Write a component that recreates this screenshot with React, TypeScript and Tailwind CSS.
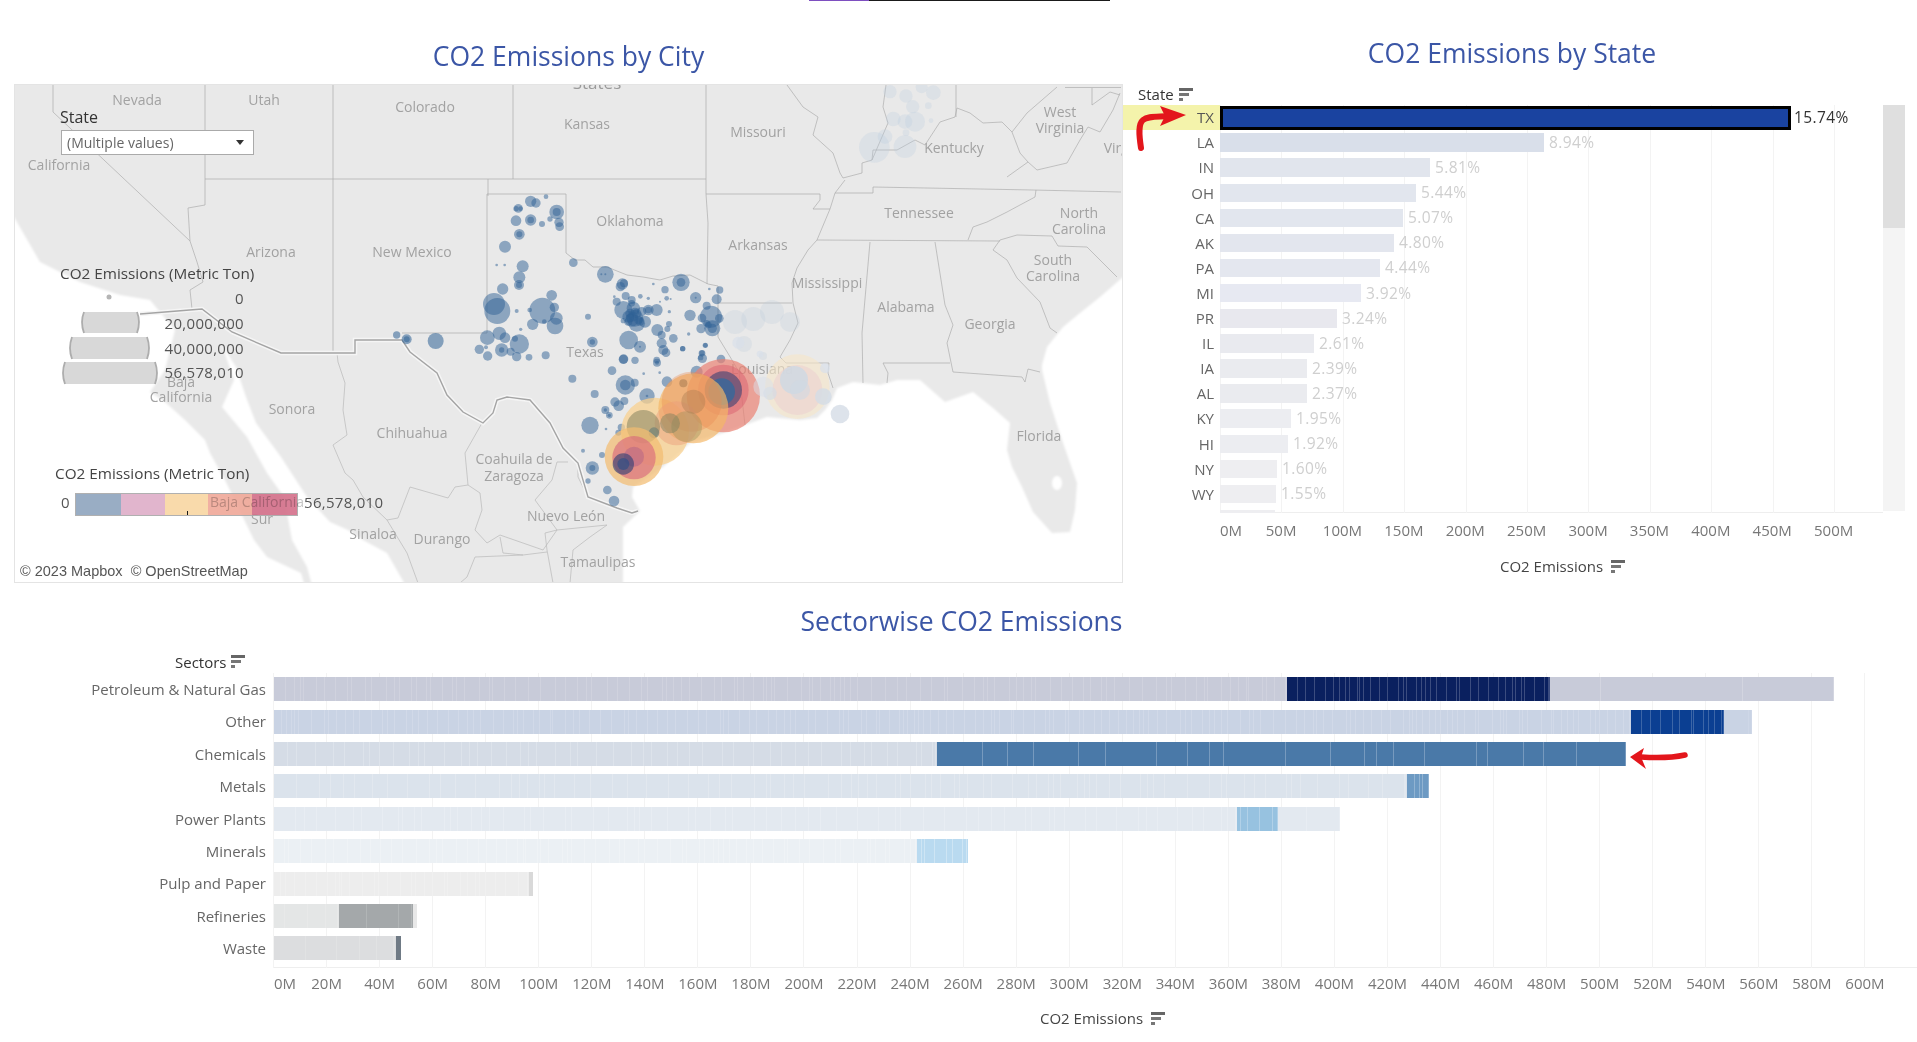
const SortIcon = () => (
  <svg width="14" height="13" viewBox="0 0 14 13" className="shrink-0">
    <rect x="0" y="0" width="14" height="3" fill="#666" />
    <rect x="0" y="5" width="10" height="3" fill="#777" />
    <rect x="0" y="10" width="4" height="3" fill="#777" />
  </svg>
);

// map labels, centre points in page pixels
const mapLabels: [string, number, number][] = [
  ["Nevada", 137, 100],
  ["Utah", 264, 100],
  ["Colorado", 425, 107],
  ["Kansas", 587, 124],
  ["Missouri", 758, 132],
  ["West", 1060, 112],
  ["Virginia", 1060, 128],
  ["Kentucky", 954, 148],
  ["Virginia", 1128, 148],
  ["California", 59, 165],
  ["Tennessee", 919, 213],
  ["Oklahoma", 630, 221],
  ["Arkansas", 758, 245],
  ["North", 1079, 213],
  ["Carolina", 1079, 229],
  ["South", 1053, 260],
  ["Carolina", 1053, 276],
  ["Arizona", 271, 252],
  ["New Mexico", 412, 252],
  ["Texas", 585, 352],
  ["Mississippi", 827, 283],
  ["Alabama", 906, 307],
  ["Georgia", 990, 324],
  ["Louisiana", 762, 369],
  ["Florida", 1039, 436],
  ["Sonora", 292, 409],
  ["Chihuahua", 412, 433],
  ["Coahuila de", 514, 459],
  ["Zaragoza", 514, 476],
  ["Nuevo León", 566, 516],
  ["Tamaulipas", 598, 562],
  ["Durango", 442, 539],
  ["Sinaloa", 373, 534],
  ["Baja", 181, 382],
  ["California", 181, 397],
  ["Sur", 262, 519],
];

const stateLines = [
  "M205 84V205L188 208L190 241L197 262L203 282L190 290L192 309",
  "M53 84V112L190 241",
  "M205 179H706",
  "M333 84V353",
  "M513 84V179",
  "M488 179V196",
  "M487 194H566V253L575 260L585 260L593 267L607 267L627 275L643 277L660 280L673 276L690 275L708 284L718 286V337L732 360L739 372L745 425",
  "M402 333H487V194",
  "M706 84V194L708 223L707 284",
  "M706 194H820V200L813 209H830",
  "M718 303H792",
  "M845 180L835 193L830 209L817 240L808 250L797 268L792 283L793 303L798 323L790 340L780 357L786 363H829L828 373L833 388",
  "M835 193H873V187L1033 190L1121 192",
  "M817 240L1000 241",
  "M870 242L862 333L863 383",
  "M935 242L945 305L953 325L947 343L953 372L1022 377L1025 382L1028 369L1040 372",
  "M883 363H950M883 363L888 373L887 383",
  "M993 250L1007 260L1017 278L1040 302L1050 328L1057 333",
  "M993 250L1000 240L1017 235L1052 236L1058 246L1087 247L1117 277",
  "M1036 190L1035 197L1020 205L1007 212L987 222L973 227L968 240",
  "M787 85L803 107L818 117L813 135L833 153L840 173L843 178L862 173L862 163L872 160L873 150L897 150L915 140L925 145L940 122L955 117L957 108L970 113L983 123L1002 122L1012 132L1027 113L1057 87",
  "M886 85L883 107L888 123L872 160",
  "M956 85V117",
  "M1012 132L1020 153L1028 162L1037 170L1067 163L1080 140L1088 127L1100 132L1113 110L1120 93",
  "M1028 162L1007 177",
  "M1065 87.5H1121M1092 88V105L1110 92L1120 95",
];

const mexicoLines = [
  "M337 353L338 362L345 383L343 410L347 435L333 445L345 473L353 480L363 497L387 520L407 553L418 583",
  "M482 423L465 453L468 485L455 487L448 498L410 487L398 518L387 520",
  "M468 485L480 493L482 510L475 530L487 543L500 535L543 550L557 530L535 500L552 480L557 462L568 462",
  "M547 550L545 533L557 530L607 525L590 537L573 550L570 583",
  "M547 550L553 583M547 552L523 555L503 553L500 537M523 555L475 557L467 577L460 583",
  "M578 463V477L588 497",
];

const border =
  "M140 314L202 309L232 332L281 353H355V340H402L410 352L437 373L447 395L463 412L483 423L493 413L497 400L507 397L530 400L550 423L563 448L578 463L588 497L617 508L632 513L638 511";

// bubbles read off at 3x, [x, y, r] relative to a crop origin
const texasNorth = [
  212,64,17, 228,69,14, 258,50,7, 290,96,22, 290,96,12, 168,122,16, 212,120,17, 212,120,10, 246,132,9, 270,117,8,
  175,85,13, 168,86,8, 182,86,7, 297,127,14, 299,140,13, 178,163,16, 178,163,9, 135,200,18, 110,255,4, 134,255,4,
  188,259,18, 178,292,18, 177,315,15, 177,315,9, 128,327,17, 340,248,13, 436,283,25, 424,283,3, 436,283,3, 487,312,17,
  492,310,12, 481,320,14, 580,312,4, 615,329,11, 663,307,26, 663,307,13, 707,353,17, 707,353,3, 779,330,11, 770,358,15,
  740,377,12, 748,327,4, 620,355,7, 632,357,3, 565,355,5, 600,365,3, 275,346,16, 102,372,33, 112,393,39, 247,392,39,
  283,382,14, 170,393,6, 209,390,7, 289,415,19, 285,438,25, 253,425,7, 218,433,17, 182,448,5, 384,410,9, 470,365,12,
  497,348,12, 541,349,7, 463,350,4, 490,390,27, 515,360,12, 520,385,20, 505,410,18, 525,415,25, 545,395,14, 565,390,16,
  590,390,18, 555,425,18, 530,430,25, 515,420,20, 490,422,8, 628,395,5, 690,406,17, 726,414,13, 753,410,33, 778,415,13,
  757,445,24, 723,446,14, 740,430,10, 592,450,18, 605,465,12, 622,447,9, 627,432,9, 640,475,13, 686,462,5, 605,490,15,
  610,510,15, 618,518,13, 668,506,8, 736,496,8, 726,520,10, 118,460,20, 82,473,22, 135,473,16, 165,476,9, 178,492,29,
  125,510,20, 125,510,8, 152,515,12, 58,508,14, 78,502,6, 83,528,14, 170,530,14, 207,532,10, 257,526,12, 397,486,16,
  397,486,8, 506,480,28, 540,500,18, 540,500,3, 490,538,14, 590,540,10, 727,535,14,
  510,400,14, 530,400,14, 520,410,14, 505,425,12, 535,420,12, 515,370,10, 525,395,12, 565,390,10, 510,415,12, 540,425,12,
  757,445,14, 745,435,10,
];

const texasSouth = [
  191,57,14, 225,61,11, 291,68,12, 291,68,6, 156,92,13, 37,116,12, 251,101,4, 299,98,4, 196,135,29, 196,135,16,
  224,128,12, 321,125,16, 410,95,18, 370,130,12, 104,162,12, 261,168,23, 261,168,4, 165,186,14, 176,197,16, 193,183,12,
  136,210,12, 136,210,5, 148,226,10, 148,226,5, 90,256,26, 138,267,4, 184,262,11, 175,278,9, 282,278,16, 69,332,6,
  126,345,9, 97,384,20, 97,384,9, 84,423,8, 142,450,13, 162,483,16, 368,26,8, 436,16,7, 426,39,8, 422,53,8, 483,57,13,
];

const westTexas = [
  200,45,11, 230,58,15, 230,58,9, 317,63,24,
];

const faintNorth = [
  283,442,46, 315,410,22, 375,440,34, 340,357,22, 375,365,22, 405,365,30, 398,320,20, 378,288,20, 330,275,20, 460,278,22,
  425,262,18, 445,317,10, 453,362,7, 378,398,10,
];

// big gulf coast plants, crop coordinates again
const gulfBubbles: [number, number, number, string, number][] = [
  [490, 167, 110, "#ea7f70", 0.68],
  [490, 150, 76, "#d9596a", 0.45],
  [490, 150, 56, "#3f4273", 0.62],
  [485, 155, 40, "#2c6a9f", 0.7],
  [285, 275, 102, "#f8d08f", 0.75],
  [400, 205, 105, "#f4b765", 0.68],
  [395, 185, 90, "#e98a52", 0.35],
  [350, 250, 66, "#ec9b7a", 0.45],
  [380, 260, 46, "#98905a", 0.4],
  [330, 250, 30, "#7c805f", 0.48],
  [400, 185, 36, "#a87a4f", 0.4],
  [370, 130, 12, "#a87a4f", 0.4],
  [250, 260, 50, "#8f8b66", 0.6],
  [282, 278, 16, "#5f7a78", 0.5],
  [222, 350, 88, "#f3bd72", 0.72],
  [222, 353, 65, "#d9657c", 0.62],
  [222, 350, 30, "#9a4f8a", 0.35],
  [190, 372, 32, "#2f3f74", 0.62],
  [190, 372, 18, "#2b4d86", 0.62],
  [712, 140, 97, "#f6e6c8", 0.6],
  [712, 150, 75, "#edd2d0", 0.6],
  [702, 120, 42, "#cdd8e4", 0.8],
  [720, 150, 30, "#cdd8e4", 0.55],
  [630, 160, 20, "#d3dce6", 0.65],
  [790, 170, 25, "#d3dce6", 0.8],
  [840, 222, 28, "#d9e0e9", 0.9],
  [610, 140, 30, "#d9e0e9", 0.5],
  [795, 85, 15, "#d9e0e9", 0.7],
  [600, 42, 10, "#d9e0e9", 0.7],
  [535, 8, 18, "#d9e0e9", 0.7],
];

const MapDrawing = () => (
  <svg className="absolute inset-0" width="1109" height="499" viewBox="15 85 1109 499">
    <defs>
      <filter id="soft" x="-5%" y="-5%" width="110%" height="110%">
        <feGaussianBlur stdDeviation="1.1" />
      </filter>
    </defs>
    <rect x="14" y="84" width="1110" height="500" fill="#e9e9e9" />
    <g fill="#fff" filter="url(#soft)">
      <path d="M4 217H14L40 262L80 282L120 295L150 300L175 330L165 370L150 392L165 402L185 420L205 440L210 453L225 480L254 540L267 557L301 573L307 593H4Z" />
      <path d="M222 345L236 367L246 397L256 423L281 457L307 497L330 522L348 530L363 540L387 553L410 593H314L307 567L292 540L284 497L267 473L247 437L222 407L234 380Z" />
      <path d="M640 511L632 497L633 487L663 467L690 443L723 433L767 417L800 420L817 418L825 410L832 400L837 388L853 382L880 385L897 380L920 380L945 402L973 392L993 408L1010 423L1007 450L1012 467L1022 487L1033 512L1052 533L1070 532L1075 510L1077 483L1062 440L1050 403L1042 370L1042 365L1047 347L1063 327L1080 313L1100 297L1123 277H1133V593H623V527Z" />
      <ellipse cx="1057" cy="483" rx="5" ry="7" />
    </g>
    {stateLines.map((d, i) => (
      <path key={i} d={d} fill="none" stroke="#adadad" strokeWidth="0.7" />
    ))}
    {mexicoLines.map((d, i) => (
      <path key={i} d={d} fill="none" stroke="#b9b9b9" strokeWidth="0.7" />
    ))}
    <path d={border} fill="none" stroke="#f5f5f5" strokeWidth="4.5" />
    <path d={border} fill="none" stroke="#a4a4a4" strokeWidth="1.4" />
    {/* size legend */}
    <circle cx="109" cy="297" r="2.5" fill="#b5b5b5" />
    <path d="M84 312H137Q141 322 137 333H84Q80 322 84 312Z" fill="#d8d8d8" />
    <path d="M72 337H147Q151 348 147 359H72Q68 348 72 337Z" fill="#d8d8d8" />
    <path d="M65 362H155Q159 373 155 384H65Q61 373 65 362Z" fill="#d8d8d8" />
    <g fill="none" stroke="#adadad" strokeWidth="1.8">
      <path d="M84 312Q80 322 84 333M137 312Q141 322 137 333" />
      <path d="M72 337Q68 348 72 359M147 337Q151 348 147 359" />
      <path d="M65 362Q61 373 65 384M155 362Q159 373 155 384" />
    </g>
  </svg>
);

const Triples = ({ ox, oy, data, fill, alpha }: { ox: number; oy: number; data: number[]; fill: string; alpha: number }) => (
  <>
    {Array.from({ length: data.length / 3 }, (_, i) => (
      <circle
        key={i}
        cx={ox + data[i * 3] / 3}
        cy={oy + data[i * 3 + 1] / 3}
        r={data[i * 3 + 2] / 3}
        fill={fill}
        fillOpacity={alpha}
      />
    ))}
  </>
);

const Bubbles = () => (
  <svg className="absolute inset-0" width="1109" height="499" viewBox="15 85 1109 499">
    <Triples ox={780} oy={0} data={faintNorth} fill="#bccbdd" alpha={0.28} />
    <Triples ox={420} oy={170} data={[945,456,36, 1000,447,36, 1056,426,36, 1110,456,30, 972,522,24, 1029,558,12]} fill="#bccbdd" alpha={0.25} />
    <Triples ox={460} oy={180} data={texasNorth} fill="#2f6295" alpha={0.5} />
    <Triples ox={560} oy={340} data={texasSouth} fill="#2f6295" alpha={0.5} />
    <Triples ox={330} oy={320} data={westTexas} fill="#2f6295" alpha={0.55} />
    {gulfBubbles.map(([x, y, r, c, a], i) => (
      <circle key={i} cx={560 + x / 3} cy={340 + y / 3} r={r / 3} fill={c} fillOpacity={a} />
    ))}
  </svg>
);

const MapPanel = () => (
  <div className="relative h-[499px] w-[1109px] overflow-hidden border border-[#e4e4e4]">
    <MapDrawing />
    {mapLabels.map(([text, x, y], i) => (
      <span
        key={i}
        className="absolute -translate-x-1/2 -translate-y-1/2 whitespace-nowrap text-[14px] text-[#a2a2a2]"
        style={{ left: x - 15, top: y - 86 }}
      >
        {text}
      </span>
    ))}
    <span className="absolute left-[582px] top-[-2px] -translate-x-1/2 -translate-y-1/2 text-[17px] text-[#9b9b9b]">
      States
    </span>
    <Bubbles />

    <div className="absolute left-[45px] top-[22px] text-[16px] leading-[20px] text-[#333]">State</div>
    <div className="absolute left-[46px] top-[45px] flex h-[25px] w-[193px] items-center justify-between border border-[#aaa] bg-white pl-[5px] pr-[9px] text-[14px] text-[#666]">
      <span>(Multiple values)</span>
      <span className="h-0 w-0 border-x-[4px] border-t-[5px] border-x-transparent border-t-[#333]" />
    </div>

    <div className="absolute left-[45px] top-[178px] whitespace-nowrap text-[15.3px] leading-[20px] text-[#444]">
      CO2 Emissions (Metric Ton)
    </div>
    <div className="absolute left-[100px] top-[201px] flex w-[129px] flex-col items-end text-[15px] leading-[24.8px] tracking-[0.3px] text-[#555]">
      <span>0</span>
      <span>20,000,000</span>
      <span>40,000,000</span>
      <span>56,578,010</span>
    </div>

    <div className="absolute left-[40px] top-[378px] whitespace-nowrap text-[15.3px] leading-[20px] text-[#444]">
      CO2 Emissions (Metric Ton)
    </div>
    <div className="absolute left-[46px] top-[408px] flex items-start gap-[6px] text-[15px] leading-[19px] tracking-[0.3px] text-[#555]">
      <span className="w-[8px]">0</span>
      <div className="relative flex h-[23px] w-[223px] border border-[#a8a8a8] opacity-90">
        <div className="w-[45px] bg-[#8ea5be]" />
        <div className="w-[44px] bg-[#deaec8]" />
        <div className="w-[43px] bg-[#f9d7a3]" />
        <div className="w-[44px] bg-[#f0a899]" />
        <div className="w-[45px] bg-[#d4708a]" />
        <div className="absolute bottom-0 left-[111px] h-[4px] w-px bg-black" />
      </div>
      <span className="whitespace-nowrap">56,578,010</span>
    </div>
    {/* this label shows through the colour legend */}
    <span className="absolute left-[242px] top-[416px] -translate-x-1/2 -translate-y-1/2 whitespace-nowrap text-[14px] text-[#c6c6c6] mix-blend-multiply">
      Baja California
    </span>

    <div className="absolute bottom-[2px] left-[4px] whitespace-nowrap bg-white/70 px-[1px] font-['Liberation_Sans',sans-serif] text-[14.5px] leading-[18px] text-[#555]">
      © 2023 Mapbox&nbsp; © OpenStreetMap
    </div>
  </div>
);

const stateRows = [
  { code: "LA", pct: "8.94%", w: 324, bar: "bg-[#d9dfea]" },
  { code: "IN", pct: "5.81%", w: 210, bar: "bg-[#e1e5ed]" },
  { code: "OH", pct: "5.44%", w: 196, bar: "bg-[#e2e6ee]" },
  { code: "CA", pct: "5.07%", w: 183, bar: "bg-[#e2e6ee]" },
  { code: "AK", pct: "4.80%", w: 174, bar: "bg-[#e3e6ee]" },
  { code: "PA", pct: "4.44%", w: 160, bar: "bg-[#e4e7ef]" },
  { code: "MI", pct: "3.92%", w: 141, bar: "bg-[#e7e9f2]" },
  { code: "PR", pct: "3.24%", w: 117, bar: "bg-[#e8e8ee]" },
  { code: "IL", pct: "2.61%", w: 94, bar: "bg-[#e9eaef]" },
  { code: "IA", pct: "2.39%", w: 87, bar: "bg-[#eaebef]" },
  { code: "AL", pct: "2.37%", w: 87, bar: "bg-[#eaebef]" },
  { code: "KY", pct: "1.95%", w: 71, bar: "bg-[#ecedf1]" },
  { code: "HI", pct: "1.92%", w: 68, bar: "bg-[#ecedf1]" },
  { code: "NY", pct: "1.60%", w: 57, bar: "bg-[#eeeef1]" },
  { code: "WY", pct: "1.55%", w: 56, bar: "bg-[#eeeef1]" },
  { code: "MN", pct: "", w: 55, bar: "bg-[#eeeef1]" },
];

const stateTicks = ["0M", "50M", "100M", "150M", "200M", "250M", "300M", "350M", "400M", "450M", "500M"];

const StateChart = () => (
  <div className="w-[794px]">
    <h2 className="h-[83px] pr-[16px] pt-[37px] text-center text-[26.5px] leading-[30px] text-[#3b56a6]">
      CO2 Emissions by State
    </h2>
    <div className="flex h-[21px] items-center gap-[5px] pl-[15px] text-[15px] text-[#333]">
      State <SortIcon />
    </div>
    <div className="mr-[12px] flex h-[408px]">
      <div className="relative flex-1 overflow-hidden">
        <div className="absolute bottom-0 left-[97px] right-0 h-px bg-[#eee]" />
        <div className="absolute bottom-0 left-[97px] top-0 flex">
          {stateTicks.map((t) => (
            <div key={t} className="h-full w-[61.4px] border-l border-[#f3f3f3]" />
          ))}
        </div>
        <div className="relative flex h-[25.1px] items-center">
          <div className="flex h-full w-[97px] items-center justify-end bg-[#f4f3ab] pr-[6px] text-[15px] text-[#555]">
            TX
          </div>
          <div className="h-[24px] w-[571px] border-[3px] border-black bg-[#1a43a0]" />
          <span className="ml-[3px] text-[15.5px] tracking-[0.4px] text-[#333]">15.74%</span>
        </div>
        {stateRows.map((r) => (
          <div key={r.code} className="relative flex h-[25.1px] items-center">
            <div className="w-[97px] pr-[6px] text-right text-[15px] text-[#666]">{r.code}</div>
            <div className={`h-[18.5px] ${r.bar}`} style={{ width: r.w }} />
            <span className="ml-[5px] text-[15.5px] tracking-[0.4px] text-[#cfcfcf]">{r.pct}</span>
          </div>
        ))}
      </div>
      <div className="h-[406px] w-[22px] bg-[#f4f4f4]">
        <div className="h-[123px] bg-[#dfdfdf]" />
      </div>
    </div>
    <div className="ml-[66px] flex h-[35px] items-center text-[15px] text-[#777]">
      {stateTicks.map((t, i) => (
        <div
          key={t}
          className={i === 0 ? "w-[61.4px] whitespace-nowrap pl-[31px]" : "w-[61.4px] whitespace-nowrap text-center"}
        >
          {t}
        </div>
      ))}
    </div>
    <div className="ml-[377px] flex h-[36px] items-center gap-[8px] text-[15px] text-[#444]">
      CO2 Emissions <SortIcon />
    </div>
  </div>
);

type Part = { w: number; bg: string; line: string; gap: number };

const sectors: { name: string; parts: Part[] }[] = [
  {
    name: "Petroleum & Natural Gas",
    parts: [
      { w: 1013.4, bg: "bg-[#c8cbd9]", line: "border-white/15", gap: 9 },
      { w: 262.6, bg: "bg-[#0a205f]", line: "border-white/20", gap: 7 },
      { w: 284, bg: "bg-[#c8cbd9]", line: "border-white/20", gap: 120 },
    ],
  },
  {
    name: "Other",
    parts: [
      { w: 1357, bg: "bg-[#c9d3e4]", line: "border-white/15", gap: 8 },
      { w: 93, bg: "bg-[#0b3f92]", line: "border-white/20", gap: 8 },
      { w: 28, bg: "bg-[#c9d3e4]", line: "border-white/10", gap: 40 },
    ],
  },
  {
    name: "Chemicals",
    parts: [
      { w: 662.5, bg: "bg-[#d5dce6]", line: "border-white/20", gap: 12 },
      { w: 689.5, bg: "bg-[#4a79a8]", line: "border-white/25", gap: 38 },
    ],
  },
  {
    name: "Metals",
    parts: [
      { w: 1133, bg: "bg-[#dbe3ec]", line: "border-white/20", gap: 14 },
      { w: 22, bg: "bg-[#6d9ac3]", line: "border-white/25", gap: 7 },
    ],
  },
  {
    name: "Power Plants",
    parts: [
      { w: 963, bg: "bg-[#e3e9f0]", line: "border-white/20", gap: 14 },
      { w: 41, bg: "bg-[#97c2e0]", line: "border-white/25", gap: 11 },
      { w: 62, bg: "bg-[#e3e9f0]", line: "border-white/20", gap: 24 },
    ],
  },
  {
    name: "Minerals",
    parts: [
      { w: 642.5, bg: "bg-[#ebf0f4]", line: "border-white/20", gap: 9 },
      { w: 51, bg: "bg-[#b9daf0]", line: "border-white/30", gap: 7 },
    ],
  },
  {
    name: "Pulp and Paper",
    parts: [
      { w: 254.5, bg: "bg-[#ededed]", line: "border-white/20", gap: 8 },
      { w: 4, bg: "bg-[#d9d9d9]", line: "border-white/0", gap: 10 },
    ],
  },
  {
    name: "Refineries",
    parts: [
      { w: 64.5, bg: "bg-[#e4e6e6]", line: "border-white/15", gap: 16 },
      { w: 74, bg: "bg-[#a4a8aa]", line: "border-white/15", gap: 26 },
      { w: 4, bg: "bg-[#e8e8e8]", line: "border-white/0", gap: 10 },
    ],
  },
  {
    name: "Waste",
    parts: [
      { w: 121.5, bg: "bg-[#dcdddf]", line: "border-white/15", gap: 22 },
      { w: 5, bg: "bg-[#6f7a85]", line: "border-white/0", gap: 10 },
    ],
  },
];

// fixed pseudo random widths so the stripes stay the same on every render
let seed = 17;
const rand = () => {
  seed = (seed * 1103515245 + 12345) % 2147483648;
  return seed / 2147483648;
};
const stripes = (w: number, gap: number) => {
  const out: number[] = [];
  let left = w;
  while (left > 0) {
    const g = Math.min(left, Math.max(1, gap * (0.3 + 1.4 * rand())));
    out.push(g);
    left -= g;
  }
  return out;
};
const sectorStripes = sectors.map((s) => s.parts.map((p) => stripes(p.w, p.gap)));

const sectorTicks = Array.from({ length: 31 }, (_, i) => `${i * 20}M`);

const SectorChart = () => (
  <div>
    <h2 className="h-[42px] pl-[6px] text-center text-[26.5px] leading-[42px] text-[#3b56a6]">
      Sectorwise CO2 Emissions
    </h2>
    <div className="flex h-[31px] items-end pl-[175px] text-[15px] text-[#333]">
      <div className="flex items-center gap-[5px]">
        Sectors <SortIcon />
      </div>
    </div>
    <div className="relative h-[295px]">
      <div className="absolute bottom-0 left-[273px] right-0 h-px bg-[#eee]" />
      <div className="absolute bottom-0 left-[273px] top-0 flex">
        {sectorTicks.map((t) => (
          <div key={t} className="h-full w-[53.05px] border-l border-[#f3f3f3]" />
        ))}
      </div>
      {sectors.map((s, si) => (
        <div key={s.name} className="relative flex h-[32.4px] items-center">
          <div className="w-[274px] shrink-0 pr-[8px] text-right text-[15px] text-[#666]">{s.name}</div>
          {s.parts.map((p, pi) => (
            <div key={pi} className={`flex h-[24px] overflow-hidden ${p.bg}`} style={{ width: p.w }}>
              {sectorStripes[si][pi].map((g, k) => (
                <div key={k} className={`h-full shrink-0 border-r ${p.line}`} style={{ width: g }} />
              ))}
            </div>
          ))}
        </div>
      ))}
    </div>
    <div className="ml-[247px] flex h-[30px] items-center text-[15px] text-[#777]">
      {sectorTicks.map((t, i) => (
        <div
          key={t}
          className={i === 0 ? "w-[53.05px] whitespace-nowrap pl-[27px]" : "w-[53.05px] whitespace-nowrap text-center"}
        >
          {t}
        </div>
      ))}
    </div>
    <div className="ml-[1040px] flex h-[41px] items-center gap-[8px] text-[15px] text-[#444]">
      CO2 Emissions <SortIcon />
    </div>
  </div>
);

const App = () => {
  return (
    <div className="relative h-[1042px] w-[1917px] overflow-hidden bg-white font-['Open_Sans',sans-serif]">
      <div className="ml-[809px] flex h-px w-[301px]">
        <div className="w-[60px] bg-[#7e4fc0]" />
        <div className="flex-1 bg-[#1a1a1a]" />
      </div>
      <div className="flex h-[599px]">
        <div className="w-[1123px] pl-[14px]">
          <h2 className="h-[83px] pt-[40px] text-center text-[26.5px] leading-[30px] text-[#3b56a6]">
            CO2 Emissions by City
          </h2>
          <MapPanel />
        </div>
        <StateChart />
      </div>
      <SectorChart />

      {/* hand drawn red arrows on top of the dashboard */}
      <svg className="absolute left-[1130px] top-[100px]" width="70" height="60" viewBox="1130 100 70 60">
        <path d="M1141 148C1139 135 1138 124 1143 120C1148 116 1155 117 1170 116" fill="none" stroke="#e3161c" strokeWidth="6" strokeLinecap="round" />
        <path d="M1160 106L1186 115L1160 126L1165 116Z" fill="#e3161c" />
      </svg>
      <svg className="absolute left-[1626px] top-[742px]" width="66" height="32" viewBox="1626 742 66 32">
        <path d="M1641 757C1656 758 1671 758 1685 755" fill="none" stroke="#e3161c" strokeWidth="5.5" strokeLinecap="round" />
        <path d="M1630 757L1644 748L1641 757L1646 769Z" fill="#e3161c" />
      </svg>
    </div>
  );
};

export default App;
